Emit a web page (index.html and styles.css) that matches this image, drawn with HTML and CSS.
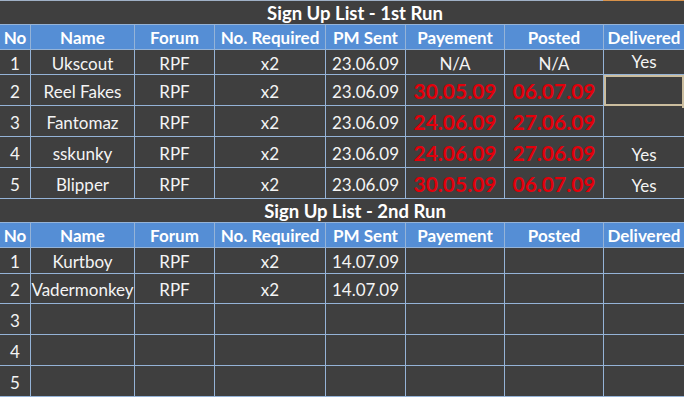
FILE: index.html
```html
<!DOCTYPE html>
<html lang="en">
<head>
<meta charset="utf-8">
<title>Sign Up List</title>
<link rel="stylesheet" href="styles.css">
</head>
<body>
<div class="sheet">
  <div class="topline"></div>

  <div class="title">Sign Up List - 1st Run</div>
  <div class="grid run1">
    <div class="c h">No</div><div class="c h">Name</div><div class="c h">Forum</div><div class="c h">No. Required</div><div class="c h">PM Sent</div><div class="c h">Payement</div><div class="c h">Posted</div><div class="c h last">Delivered</div>

    <div class="c">1</div><div class="c">Ukscout</div><div class="c">RPF</div><div class="c">x2</div><div class="c">23.06.09</div><div class="c">N/A</div><div class="c">N/A</div><div class="c last low">Yes</div>

    <div class="c">2</div><div class="c">Reel Fakes</div><div class="c">RPF</div><div class="c">x2</div><div class="c">23.06.09</div><div class="c red">30.05.09</div><div class="c red">06.07.09</div><div class="c last sel"></div>

    <div class="c">3</div><div class="c">Fantomaz</div><div class="c">RPF</div><div class="c">x2</div><div class="c">23.06.09</div><div class="c red">24.06.09</div><div class="c red">27.06.09</div><div class="c last"></div>

    <div class="c">4</div><div class="c">sskunky</div><div class="c">RPF</div><div class="c">x2</div><div class="c">23.06.09</div><div class="c red">24.06.09</div><div class="c red">27.06.09</div><div class="c last low">Yes</div>

    <div class="c">5</div><div class="c">Blipper</div><div class="c">RPF</div><div class="c">x2</div><div class="c">23.06.09</div><div class="c red">30.05.09</div><div class="c red">06.07.09</div><div class="c last low">Yes</div>
  </div>

  <div class="title">Sign Up List - 2nd Run</div>
  <div class="grid run2">
    <div class="c h">No</div><div class="c h">Name</div><div class="c h">Forum</div><div class="c h">No. Required</div><div class="c h">PM Sent</div><div class="c h">Payement</div><div class="c h">Posted</div><div class="c h last">Delivered</div>

    <div class="c">1</div><div class="c">Kurtboy</div><div class="c">RPF</div><div class="c">x2</div><div class="c">14.07.09</div><div class="c"></div><div class="c"></div><div class="c last"></div>

    <div class="c">2</div><div class="c">Vadermonkey</div><div class="c">RPF</div><div class="c">x2</div><div class="c">14.07.09</div><div class="c"></div><div class="c"></div><div class="c last"></div>

    <div class="c">3</div><div class="c"></div><div class="c"></div><div class="c"></div><div class="c"></div><div class="c"></div><div class="c"></div><div class="c last"></div>

    <div class="c">4</div><div class="c"></div><div class="c"></div><div class="c"></div><div class="c"></div><div class="c"></div><div class="c"></div><div class="c last"></div>

    <div class="c">5</div><div class="c"></div><div class="c"></div><div class="c"></div><div class="c"></div><div class="c"></div><div class="c"></div><div class="c last"></div>
  </div>
</div>
</body>
</html>
```

FILE: styles.css
```css
html, body {
  margin: 0;
  padding: 0;
  background: #3f3f3f;
}

.sheet {
  width: 684px;
  height: 397px;
  overflow: hidden;
  background: #3f3f3f;
  font-family: Lato, "Liberation Sans", sans-serif;
  font-size: 17px;
  color: #f4f4f4;
}

.topline {
  height: 1px;
  background: linear-gradient(to right, #9fb0c6 0, #9fb0c6 603px, #d8924a 603px, #d8924a 100%);
}

.title {
  height: 23px;
  box-sizing: border-box;
  padding: 2px 0 0 26px;
  text-align: center;
  font-weight: 700;
  font-size: 18.5px;
  line-height: 21px;
  color: #ffffff;
}

.grid {
  display: grid;
  grid-template-columns: 31px 104px 80px 111px 80px 99px 99px 80px;
}

.run1 {
  grid-template-rows: 26px 25px 31px 31px 31px 31px;
}

.run2 {
  grid-template-rows: 26px 26px 30px 31px 31px 31px;
}

.c {
  box-sizing: border-box;
  border-right: 1px solid #95b3d7;
  border-bottom: 1px solid #95b3d7;
  display: flex;
  align-items: center;
  justify-content: center;
  padding-top: 2px;
  white-space: nowrap;
  line-height: 19px;
}

.c.last {
  border-right: none;
}

.h {
  background: #558ed5;
  border-top: 1px solid #95b3d7;
  font-weight: 700;
  color: #ffffff;
  padding-top: 1px;
}

.red {
  color: #e3000b;
  font-weight: 700;
  font-size: 21px;
  padding-top: 1px;
}

.low {
  align-items: flex-end;
  padding-bottom: 3px;
}

.sel {
  position: relative;
  outline: 2px solid #cbbd9e;
  outline-offset: -2px;
}

.sel::after {
  content: "";
  position: absolute;
  right: -3px;
  bottom: -3px;
  width: 5px;
  height: 5px;
  background: #cbbd9e;
}
```
